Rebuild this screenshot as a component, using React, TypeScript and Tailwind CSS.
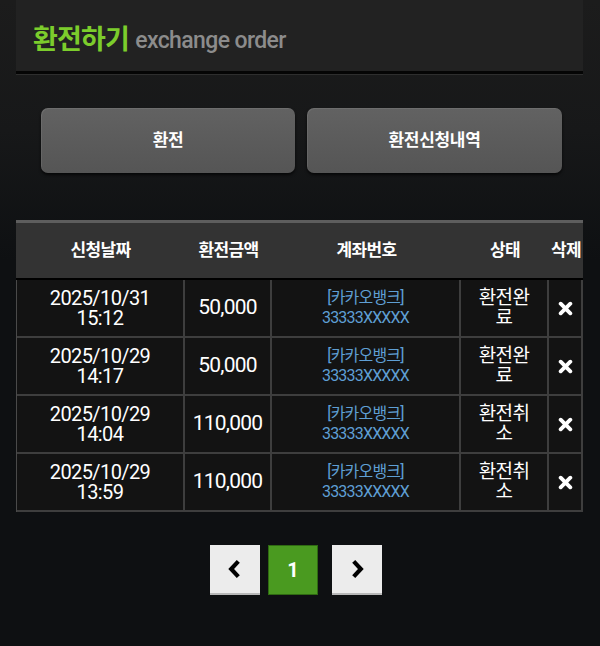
import React from "react";

const font = { fontFamily: 'Roboto, "Noto Sans CJK KR", "Noto Sans", sans-serif' };

const rows = [
  { d: "2025/10/31", t: "15:12", amt: "50,000", s1: "환전완", s2: "료" },
  { d: "2025/10/29", t: "14:17", amt: "50,000", s1: "환전완", s2: "료" },
  { d: "2025/10/29", t: "14:04", amt: "110,000", s1: "환전취", s2: "소" },
  { d: "2025/10/29", t: "13:59", amt: "110,000", s1: "환전취", s2: "소" },
];

function XIcon() {
  return (
    <svg width="15" height="15" viewBox="0 0 14 14">
      <path d="M2.5 2.5 L11.5 11.5 M11.5 2.5 L2.5 11.5" stroke="#fff" strokeWidth="3.6" strokeLinecap="round" />
    </svg>
  );
}

function Chevron({ dir }: { dir: "l" | "r" }) {
  return (
    <svg width="18" height="22" viewBox="0 0 16 20">
      {dir === "l" ? (
        <path d="M11 3 L4.5 10 L11 17" stroke="#000" strokeWidth="3.8" fill="none" strokeLinejoin="miter" />
      ) : (
        <path d="M5 3 L11.5 10 L5 17" stroke="#000" strokeWidth="3.8" fill="none" strokeLinejoin="miter" />
      )}
    </svg>
  );
}

export default function App() {
  return (
    <div
      className="relative w-[600px] h-[646px] overflow-hidden bg-[#0e1012]"
      style={font}
    >
      <div className="absolute inset-x-0 top-0 h-[260px] bg-gradient-to-b from-[#1c1c1c] via-[#171819] to-[#0e1012]" />
      <div className="relative flex flex-col">
        {/* Header */}
        <div className="mx-[16px] w-[567px] h-[74px] bg-[#222222] flex items-center pl-[17px] pt-[10px] border-b-[3px] border-[#050505]">
          <span className="text-[27px] font-bold text-[#7ccd2c] tracking-[-0.8px] leading-none">환전하기</span>
          <span className="ml-[6px] text-[23px] text-[#8c8c8c] tracking-[-0.6px] leading-none font-medium">exchange order</span>
        </div>
        <div className="mx-[16px] w-[567px] h-[1px] bg-[#2e2e2e]" />

        {/* Buttons */}
        <div className="flex ml-[41px] mt-[33px] gap-[12px]">
          <div className="w-[254px] h-[65px] rounded-[7px] bg-gradient-to-b from-[#626262] to-[#555555] shadow-[0_2px_3px_rgba(0,0,0,0.7),inset_1px_1px_0_rgba(255,255,255,0.08)] flex items-center justify-center text-white font-bold text-[17px] tracking-[-0.3px]">
            환전
          </div>
          <div className="w-[255px] h-[65px] rounded-[7px] bg-gradient-to-b from-[#626262] to-[#555555] shadow-[0_2px_3px_rgba(0,0,0,0.7),inset_1px_1px_0_rgba(255,255,255,0.08)] flex items-center justify-center text-white font-bold text-[17px] tracking-[-0.3px]">
            환전신청내역
          </div>
        </div>

        {/* Table */}
        <div className="ml-[16px] mt-[47px] w-[567px]">
          <div className="h-[60px] border-t-[3px] border-[#5e5e5e] border-b-[2px] border-b-[#000] bg-[#333333] grid grid-cols-[169px_87px_189px_88px_34px] items-center text-white font-bold text-[17px] tracking-[-0.6px]">
            <div className="text-center">신청날짜</div>
            <div className="text-center">환전금액</div>
            <div className="text-center">계좌번호</div>
            <div className="text-center">상태</div>
            <div className="text-center whitespace-nowrap">삭제</div>
          </div>
          <div className="border-l border-[#4a4a4a] bg-[#131313]">
            {rows.map((r, i) => (
              <div
                key={i}
                className="h-[58px] grid grid-cols-[168px_87px_189px_88px_34px] border-b-[2px] border-[#3e3e3e] text-white"
              >
                <div className="flex items-center justify-center text-center border-r-[2px] border-[#3e3e3e] text-[20px] leading-[20px] tracking-[-0.6px]">
                  <span>
                    {r.d}
                    <br />
                    {r.t}
                  </span>
                </div>
                <div className="flex items-center justify-center border-r-[2px] border-[#3e3e3e] text-[21px] tracking-[-0.8px]">
                  {r.amt}
                </div>
                <div className="flex items-center justify-center text-center border-r-[2px] border-[#3e3e3e] text-[16px] leading-[20px] text-[#5f9fd4] tracking-[-0.8px]">
                  <span>
                    [카카오뱅크]
                    <br />
                    33333XXXXX
                  </span>
                </div>
                <div className="flex items-center justify-center text-center border-r-[2px] border-[#3e3e3e] text-[19px] leading-[20px] tracking-[-0.6px]">
                  <span>
                    {r.s1}
                    <br />
                    {r.s2}
                  </span>
                </div>
                <div className="flex items-center justify-center border-r-[2px] border-[#3e3e3e]">
                  <XIcon />
                </div>
              </div>
            ))}
          </div>
        </div>

        {/* Pagination */}
        <div className="flex ml-[210px] mt-[33px]">
          <div className="w-[50px] h-[50px] bg-[#ececec] border-b-[2px] border-[#b8b8b8] flex items-center justify-center">
            <Chevron dir="l" />
          </div>
          <div className="ml-[8px] w-[50px] h-[50px] bg-[#4a9a20] border border-[#2f6a12] flex items-center justify-center text-white font-bold text-[20px]">
            1
          </div>
          <div className="ml-[14px] w-[50px] h-[50px] bg-[#ececec] border-b-[2px] border-[#b8b8b8] flex items-center justify-center">
            <Chevron dir="r" />
          </div>
        </div>
      </div>
    </div>
  );
}
